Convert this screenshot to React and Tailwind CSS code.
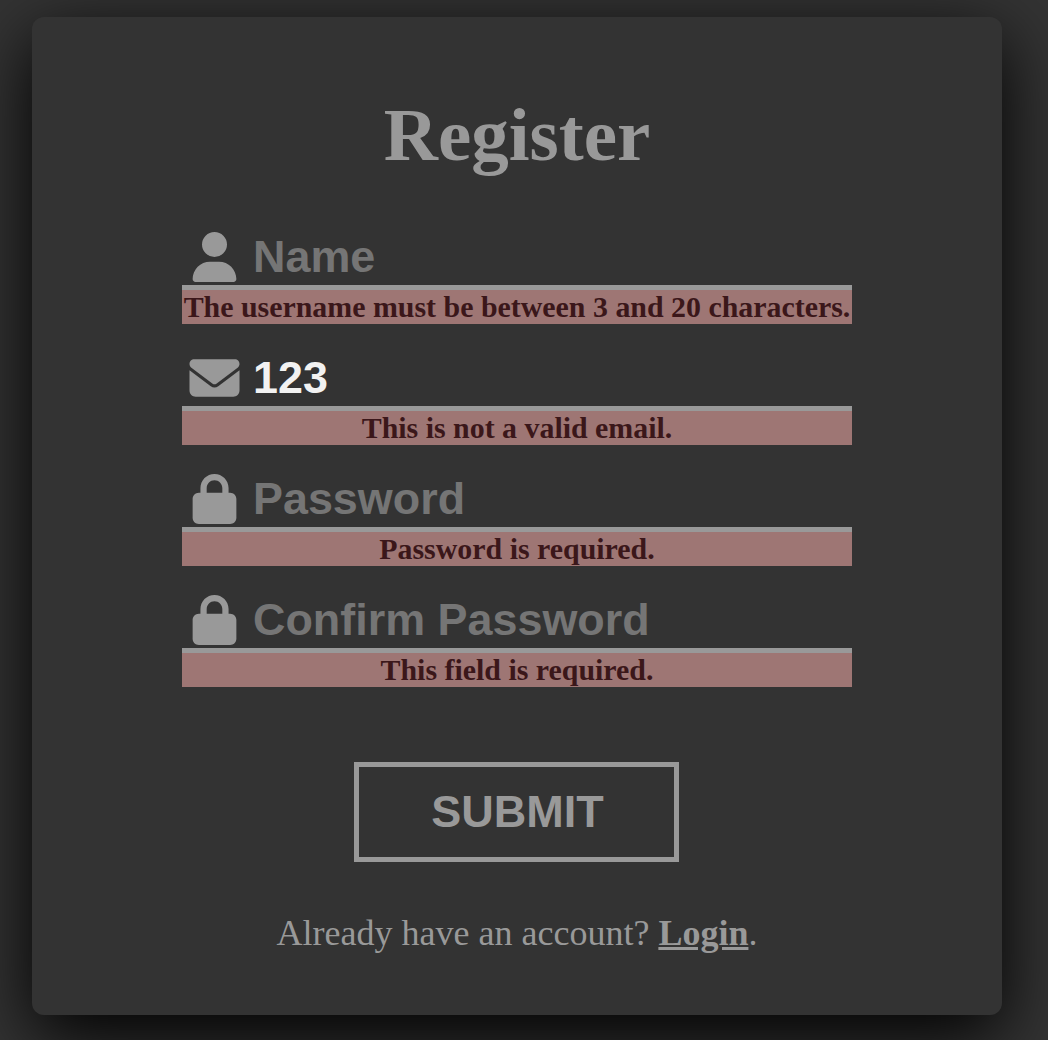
import { FaUser, FaEnvelope, FaLock } from "react-icons/fa6";

const fields = [
  { icon: FaUser, placeholder: "Name", value: "", error: "The username must be between 3 and 20 characters." },
  { icon: FaEnvelope, placeholder: "Email", value: "123", error: "This is not a valid email." },
  { icon: FaLock, placeholder: "Password", value: "", error: "Password is required." },
  { icon: FaLock, placeholder: "Confirm Password", value: "", error: "This field is required." },
];

function Field({ icon: Icon, placeholder, value, error }) {
  return (
    <div className="h-[121px]">
      <div className="flex h-[61px] items-center border-b-[5px] border-[#999999] pl-[7px] pb-px">
        <Icon className="h-[50px] w-[51px] shrink-0 text-[#999999]" />
        <input
          className="ml-[13px] h-[53px] w-[560px] bg-transparent font-['Liberation_Sans',sans-serif] text-[44.9px] font-bold text-[#f2f2f2] outline-none placeholder:text-[#757575]"
          placeholder={placeholder}
          defaultValue={value}
        />
      </div>
      <p className="h-[34px] whitespace-nowrap bg-[#9e7674] text-center text-[29.9px] leading-[34px] font-bold text-[#3b171a]">
        {error}
      </p>
    </div>
  );
}

export default function App() {
  return (
    <div className="flex h-[1040px] w-[1048px] overflow-hidden bg-[#333333] pt-[17px] pl-8 font-['Liberation_Serif',serif] text-[#999999]">
      <main className="flex h-[998px] w-[970px] flex-col items-center rounded-[12px] bg-[#333333] shadow-[0_21px_72px_0_#000000]">
        <h1 className="mt-[76px] h-[84px] text-[75px] leading-[84px] font-bold">Register</h1>
        <form className="mt-[52px] w-[670px]">
          {fields.map((f) => <Field key={f.placeholder} {...f} />)}
        </form>
        <button className="mt-[49px] mr-px h-[100px] w-[325px] border-[5px] border-[#999999] pl-0.5 font-['Liberation_Sans',sans-serif] text-[45px] font-bold">
          SUBMIT
        </button>
        <p className="mt-[50px] text-[36px] leading-[42px]">
          Already have an account? <a className="font-bold underline" href="#login">Login</a>.
        </p>
      </main>
    </div>
  );
}
